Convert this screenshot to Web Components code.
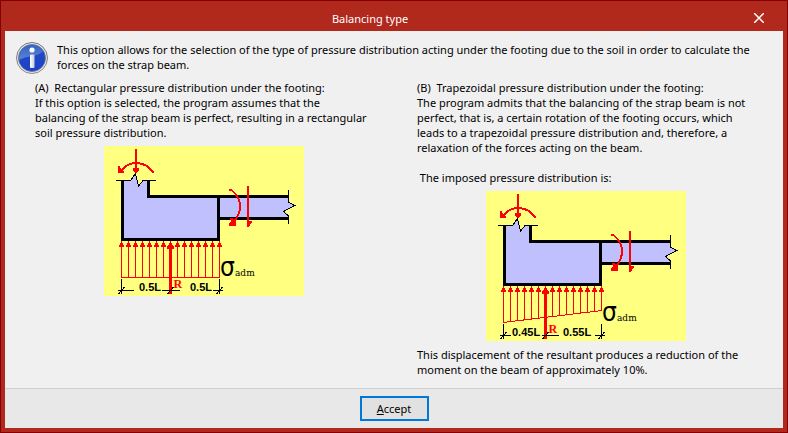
<!DOCTYPE html>
<html lang="en">
<head>
<meta charset="utf-8">
<title>Balancing type</title>
<style>
    body {
        margin: 0;
        font-family: "Noto Sans", "Open Sans", sans-serif;
        font-size: 11px;
        line-height: 15px;
        color: #000;
    }
</style>
</head>
<body>
<dialog-window heading="Balancing type">
    <info-message>
        This option allows for the selection of the type of pressure distribution acting under the footing due to the soil in order to calculate the<br>
        forces on the strap beam.
    </info-message>
    <option-columns>
        <balancing-option>
            (A)&nbsp; Rectangular pressure distribution under the footing:<br>
            If this option is selected, the program assumes that the<br>
            balancing of the strap beam is perfect, resulting in a rectangular<br>
            soil pressure distribution.
            <footing-diagram slot="figure" left="0.5L" right="0.5L" resultant="7" rise="0"></footing-diagram>
        </balancing-option>
        <balancing-option>
            (B)&nbsp; Trapezoidal pressure distribution under the footing:<br>
            The program admits that the balancing of the strap beam is not<br>
            perfect, that is, a certain rotation of the footing occurs, which<br>
            leads to a trapezoidal pressure distribution and, therefore, a<br>
            relaxation of the forces acting on the beam.<br>
            <br>
            &nbsp;The imposed pressure distribution is:
            <footing-diagram slot="figure" left="0.45L" right="0.55L" resultant="6" rise="12"></footing-diagram>
            <span slot="note">This displacement of the resultant produces a reduction of the<br>
            moment on the beam of approximately 10%.</span>
        </balancing-option>
    </option-columns>
    <accept-button slot="actions"></accept-button>
</dialog-window>

<script>
(function () {
    // Window frame: title bar, content and a strip of buttons
    let windowTemplate = document.createElement("template");
    windowTemplate.innerHTML = `
    <style>
    :host {
        display: flex;
        flex-direction: column;
        box-sizing: border-box;
        min-height: 100vh;
        padding: 0 4px 4px;
        border: 1px solid #850000;
        background: #b1281d;
    }
    header {
        display: flex;
        height: 30px;
        align-items: center;
        color: #fff;
    }
    h1 {
        flex: 1;
        margin: 0;
        padding-top: 4px;
        font-size: 11px;
        font-weight: normal;
        text-align: center;
    }
    .close {
        display: grid;
        place-items: center;
        width: 48px;
        height: 30px;
        padding: 4px 0 0;
        border: 0;
        background: none;
        color: inherit;
    }
    main {
        flex: 1;
        padding: 11px 11px 0;
        background: #f0f0f0;
    }
    footer {
        display: flex;
        justify-content: center;
        padding: 7px 0;
        border-top: 1px solid #d0d0d0;
        background: #e8e8e8;
    }
    </style>
    <header>
        <h1></h1>
        <button class="close" type="button" aria-label="Close">
            <svg width="10" height="10" viewBox="0 0 10 10"><path d="M0 0L10 10M10 0L0 10" stroke="currentColor" stroke-width="1.5"/></svg>
        </button>
    </header>
    <main><slot></slot></main>
    <footer><slot name="actions"></slot></footer>
    `;
    class DialogWindow extends HTMLElement {
        constructor() {
            super();
            this._shadowRoot = this.attachShadow({ mode: "open" });
            this._shadowRoot.appendChild(windowTemplate.content.cloneNode(true));
        }
        connectedCallback() {
            this._shadowRoot.querySelector("h1").textContent = this.getAttribute("heading");
        }
    }
    customElements.define("dialog-window", DialogWindow);

    let messageTemplate = document.createElement("template");
    messageTemplate.innerHTML = `
    <style>
    :host {
        display: flex;
        gap: 9px;
    }
    svg {
        flex: none;
    }
    p {
        margin: 0;
    }
    </style>
    <svg width="32" height="32" viewBox="0 0 32 32" aria-hidden="true">
        <defs>
            <linearGradient id="rim" x1="0" y1="0" x2="0" y2="1">
                <stop offset="0" stop-color="#777"/>
                <stop offset="1" stop-color="#8c8c8c"/>
            </linearGradient>
            <linearGradient id="ball" x1="0" y1="0" x2="0" y2="1">
                <stop offset="0" stop-color="#2350b8"/>
                <stop offset="1" stop-color="#1c3fd0"/>
            </linearGradient>
            <linearGradient id="shine" x1="0" y1="0" x2="0" y2="1">
                <stop offset="0" stop-color="#3d6cc8"/>
                <stop offset="1" stop-color="#6f94e4"/>
            </linearGradient>
            <linearGradient id="stem" x1="0" y1="0" x2="1" y2="0">
                <stop offset="0" stop-color="#fff"/>
                <stop offset="1" stop-color="#c9cddb"/>
            </linearGradient>
        </defs>
        <circle cx="16" cy="16" r="15.5" fill="#e4e4e4" stroke="url(#rim)"/>
        <circle cx="16" cy="16" r="13.5" fill="url(#ball)" stroke="#6d7590" stroke-width="0.8"/>
        <path d="M3.2 18A13 13 0 0 1 27 9Q24 13 16 14Q8 15 3.2 18Z" fill="url(#shine)" opacity="0.75"/>
        <circle cx="16" cy="8" r="2.6" fill="#fff"/>
        <rect x="14" y="12.500" width="4.500" height="13.500" rx="1" fill="url(#stem)"/>
    </svg>
    <p><slot></slot></p>
    `;
    class InfoMessage extends HTMLElement {
        constructor() {
            super();
            this._shadowRoot = this.attachShadow({ mode: "open" });
            this._shadowRoot.appendChild(messageTemplate.content.cloneNode(true));
        }
    }
    customElements.define("info-message", InfoMessage);

    let columnsTemplate = document.createElement("template");
    columnsTemplate.innerHTML = `
    <style>
    :host {
        display: grid;
        grid-template-columns: 1fr 1fr;
        gap: 44px;
        padding: 6px 17px 0 19px;
    }
    </style>
    <slot></slot>
    `;
    class OptionColumns extends HTMLElement {
        constructor() {
            super();
            this._shadowRoot = this.attachShadow({ mode: "open" });
            this._shadowRoot.appendChild(columnsTemplate.content.cloneNode(true));
        }
    }
    customElements.define("option-columns", OptionColumns);

    let optionTemplate = document.createElement("template");
    optionTemplate.innerHTML = `
    <style>
    :host {
        display: flex;
        flex-direction: column;
        gap: 6px;
        min-width: 0;
    }
    p {
        margin: 0;
    }
    slot[name="figure"] {
        display: flex;
        justify-content: center;
    }
    </style>
    <p><slot></slot></p>
    <slot name="figure"></slot>
    <p><slot name="note"></slot></p>
    `;
    class BalancingOption extends HTMLElement {
        constructor() {
            super();
            this._shadowRoot = this.attachShadow({ mode: "open" });
            this._shadowRoot.appendChild(optionTemplate.content.cloneNode(true));
        }
    }
    customElements.define("balancing-option", BalancingOption);

    // Footing with strap beam; the soil pressure below depends on the attributes
    class FootingDiagram extends HTMLElement {
        constructor() {
            super();
            this._shadowRoot = this.attachShadow({ mode: "open" });
        }
        connectedCallback() {
            let rise = Number(this.getAttribute("rise"));
            let index = Number(this.getAttribute("resultant"));
            let left = this.getAttribute("left");
            let right = this.getAttribute("right");
            let x = 17.5 + index * 7;
            let arrows = "";
            for (let i = 0; i < 15; i++) {
                let ax = 17.5 + i * 7;
                let ay = 131.5 - rise * i / 14;
                arrows += `<path d="M${ax} 96V${ay}" stroke="red"/>
                    <path d="M${ax - 0.5} 95h1v2h1v2h1v2h-5v-2h1v-2h1z" fill="red"/>`;
            }
            let tick = (tx) => `<path d="M${tx - 3} 148L${tx + 3} 141"/>`;
            this._shadowRoot.innerHTML = `
            <style>
            :host {
                display: block;
            }
            svg {
                display: block;
            }
            .dim {
                font: bold 11px "Liberation Sans", sans-serif;
            }
            .res {
                font: bold 12px "Liberation Serif", serif;
                fill: red;
            }
            .sigma {
                font: 26px "DejaVu Sans Condensed", "DejaVu Sans", sans-serif;
            }
            .sub {
                font: 9px "DejaVu Serif", serif;
            }
            </style>
            <svg width="200" height="150" viewBox="0 0 200 150" fill="none" shape-rendering="crispEdges">
                <rect width="200" height="150" fill="#ffff80"/>
                <path d="M18 35H27L31 28L35 40L39 35H45V50H185V56L190 60L180 65L185 70V73H115V94H18Z" fill="#c0c0ff"/>
                <path d="M18.5 35V93.500H114.500V50.500M44.500 35V50.500H184M114.500 72.500H184" stroke="#000" stroke-width="3"/>
                <path d="M12 34.500H26.500L31.500 27.500L34.500 40L39 34.500H52M184.500 44V56L190.500 59.500L179.500 65.500L184.500 70V78" stroke="#000"/>
                <g stroke="red" stroke-width="2">
                    <path d="M32 3V23M17 25Q23 17 32 17Q43 17 49.500 27"/>
                    <path d="M125 43.500H127Q136 51 136 60Q136 69 130 75M144 40V77"/>
                </g>
                <path d="M29 22H35V24L33 27H31L29 24ZM14 20H16V22L20 25V27H14ZM126 72H128L132 76V80H125V78L127 75ZM143 75H148V76L145 81H143Z" fill="red"/>
                ${arrows}
                <path d="M17 131.500L116 ${131.5 - rise}" stroke="red"/>
                <path d="M${x} 101V148" stroke="red" stroke-width="3"/>
                <path d="M${x} 96l1.500 2l2 3v2h-7v-2l2 -3z" fill="red"/>
                <g stroke="#000">
                    <path d="M17.500 133V148M115.500 133V148"/>
                    <path d="M14 144.500H${rise ? 25 : 30}M${x - (rise ? 4 : 9)} 144.500H${x + (rise ? 13 : 9)}M109 144.500H119"/>
                    ${tick(17.5)}${tick(x)}${tick(115.5)}
                </g>
                <g fill="#000">
                    <text class="dim" x="${rise ? 26 : 35}" y="145">${left}</text>
                    <text class="dim" x="${rise ? 77 : 86}" y="145">${right}</text>
                    <text class="res" x="${x + 3}" y="142">R</text>
                    <text class="sigma" x="116" y="130">σ</text>
                    <text class="sub" x="131" y="130">adm</text>
                </g>
            </svg>`;
        }
    }
    customElements.define("footing-diagram", FootingDiagram);

    let buttonTemplate = document.createElement("template");
    buttonTemplate.innerHTML = `
    <style>
    :host {
        display: block;
    }
    button {
        display: block;
        min-width: 69px;
        height: 25px;
        padding: 0 8px;
        border: 2px solid #0078d7;
        background: #e1e1e1;
        color: inherit;
        font: inherit;
    }
    </style>
    <button type="button" accesskey="a"><u>A</u>ccept</button>
    `;
    class AcceptButton extends HTMLElement {
        constructor() {
            super();
            this._shadowRoot = this.attachShadow({ mode: "open" });
            this._shadowRoot.appendChild(buttonTemplate.content.cloneNode(true));
        }
    }
    customElements.define("accept-button", AcceptButton);
})();
</script>
</body>
</html>
